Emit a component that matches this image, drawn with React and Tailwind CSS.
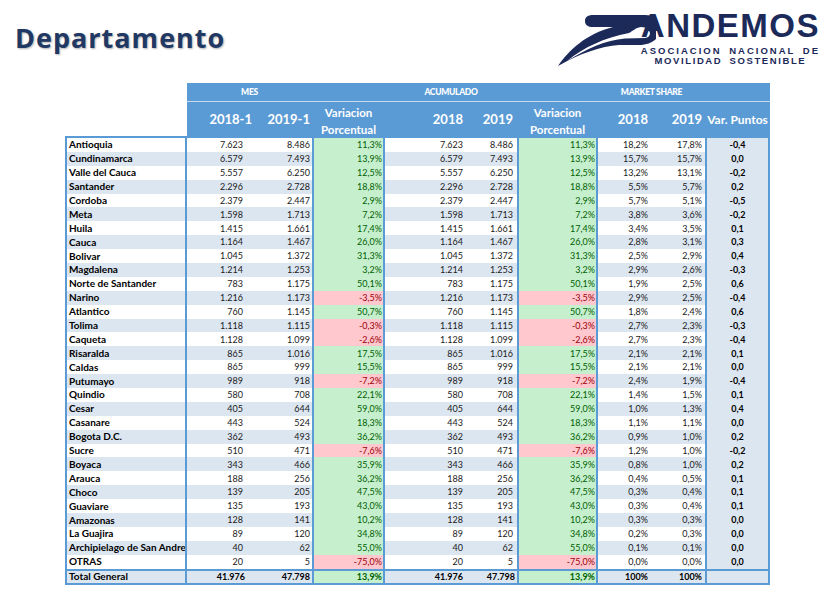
import React from "react";

const rows = [
  ["Antioquia", "7.623", "8.486", "11,3%", "18,2%", "17,8%", "-0,4"],
  ["Cundinamarca", "6.579", "7.493", "13,9%", "15,7%", "15,7%", "0,0"],
  ["Valle del Cauca", "5.557", "6.250", "12,5%", "13,2%", "13,1%", "-0,2"],
  ["Santander", "2.296", "2.728", "18,8%", "5,5%", "5,7%", "0,2"],
  ["Cordoba", "2.379", "2.447", "2,9%", "5,7%", "5,1%", "-0,5"],
  ["Meta", "1.598", "1.713", "7,2%", "3,8%", "3,6%", "-0,2"],
  ["Huila", "1.415", "1.661", "17,4%", "3,4%", "3,5%", "0,1"],
  ["Cauca", "1.164", "1.467", "26,0%", "2,8%", "3,1%", "0,3"],
  ["Bolivar", "1.045", "1.372", "31,3%", "2,5%", "2,9%", "0,4"],
  ["Magdalena", "1.214", "1.253", "3,2%", "2,9%", "2,6%", "-0,3"],
  ["Norte de Santander", "783", "1.175", "50,1%", "1,9%", "2,5%", "0,6"],
  ["Narino", "1.216", "1.173", "-3,5%", "2,9%", "2,5%", "-0,4"],
  ["Atlantico", "760", "1.145", "50,7%", "1,8%", "2,4%", "0,6"],
  ["Tolima", "1.118", "1.115", "-0,3%", "2,7%", "2,3%", "-0,3"],
  ["Caqueta", "1.128", "1.099", "-2,6%", "2,7%", "2,3%", "-0,4"],
  ["Risaralda", "865", "1.016", "17,5%", "2,1%", "2,1%", "0,1"],
  ["Caldas", "865", "999", "15,5%", "2,1%", "2,1%", "0,0"],
  ["Putumayo", "989", "918", "-7,2%", "2,4%", "1,9%", "-0,4"],
  ["Quindio", "580", "708", "22,1%", "1,4%", "1,5%", "0,1"],
  ["Cesar", "405", "644", "59,0%", "1,0%", "1,3%", "0,4"],
  ["Casanare", "443", "524", "18,3%", "1,1%", "1,1%", "0,0"],
  ["Bogota D.C.", "362", "493", "36,2%", "0,9%", "1,0%", "0,2"],
  ["Sucre", "510", "471", "-7,6%", "1,2%", "1,0%", "-0,2"],
  ["Boyaca", "343", "466", "35,9%", "0,8%", "1,0%", "0,2"],
  ["Arauca", "188", "256", "36,2%", "0,4%", "0,5%", "0,1"],
  ["Choco", "139", "205", "47,5%", "0,3%", "0,4%", "0,1"],
  ["Guaviare", "135", "193", "43,0%", "0,3%", "0,4%", "0,1"],
  ["Amazonas", "128", "141", "10,2%", "0,3%", "0,3%", "0,0"],
  ["La Guajira", "89", "120", "34,8%", "0,2%", "0,3%", "0,0"],
  ["Archipielago de San Andre", "40", "62", "55,0%", "0,1%", "0,1%", "0,0"],
  ["OTRAS", "20", "5", "-75,0%", "0,0%", "0,0%", "0,0"],
];

function Swoosh() {
  return (
    <svg
      width="100"
      height="58"
      viewBox="555 9 100 58"
      className="-mr-[15px] shrink-0"
    >
      <path
        fillRule="evenodd"
        fill="#1c2a5a"
        d="M584 21 C584 17 587 15 592 15 L644 15 C656 15 662 22 660 30 C658 39 650 45 638 45 L618 45 C600 46 578 54 557 66 C568 50 585 34 612 27 L592 27 C587 27 584 25 584 21 Z M640 27 C650 27 652 37 644 38 L624 38.5 C605 40 585 49 566 61 C583 47 603 38 628 33 C632 31 634 28 640 27 Z"
      />
    </svg>
  );
}

function Logo() {
  return (
    <div className="flex items-start pt-[9px] pr-[16px]">
      <Swoosh />
      <div className="flex flex-col items-center font-['Liberation_Sans',sans-serif] font-bold text-[#1c2a5a]">
        <div className="text-[33px] leading-[33px] tracking-[1.5px]">ANDEMOS</div>
        <div className="mt-[3.5px] text-[9.5px] leading-[10px] tracking-[2px] [word-spacing:3px] whitespace-nowrap">
          ASOCIACION NACIONAL DE
        </div>
        <div className="text-[9.5px] leading-[10px] tracking-[1.6px] [word-spacing:3px] whitespace-nowrap">
          MOVILIDAD SOSTENIBLE
        </div>
      </div>
    </div>
  );
}

const BL = "border-[#5b9bd5]";

function DataRow({ r, i }) {
  const bg = i % 2 ? "bg-[#dce6f1]" : "bg-white";
  const neg = r[3].startsWith("-");
  const vc = neg
    ? "bg-[#ffc7ce] text-[#9c0006]"
    : "bg-[#c6efce] text-[#006100]";
  return (
    <div className={`flex h-[13.9px] text-[9px] text-[#1a1a1a] ${bg}`}>
      <div className={`w-[122px] border-x-2 ${BL} pl-[2px] flex items-center font-bold text-[10px] text-black overflow-hidden whitespace-nowrap`}>
        {r[0]}
      </div>
      <div className="w-[63px] pr-[7px] flex items-center justify-end">{r[1]}</div>
      <div className="w-[62px] pr-[2px] flex items-center justify-end">{r[2]}</div>
      <div className={`w-[73px] border-x-2 ${BL} pr-[1px] flex items-center justify-end ${vc}`}>{r[3]}</div>
      <div className="w-[80px] pr-[2px] flex items-center justify-end">{r[1]}</div>
      <div className="w-[52px] pr-[4px] flex items-center justify-end">{r[2]}</div>
      <div className={`w-[81px] border-x-2 ${BL} pr-[1px] flex items-center justify-end ${vc}`}>{r[3]}</div>
      <div className="w-[54px] pr-[4px] flex items-center justify-end">{r[4]}</div>
      <div className="w-[53px] pr-[3px] flex items-center justify-end">{r[5]}</div>
      <div className={`w-[65px] border-x-2 ${BL} bg-[#dce6f1] flex items-center justify-center font-bold text-black`}>
        {r[6]}
      </div>
    </div>
  );
}

function TotalRow() {
  const vc = "bg-[#c6efce] text-[#006100]";
  return (
    <div className={`flex h-[16px] border-y-2 ${BL} bg-[#dce6f1] text-[9px] font-bold text-black`}>
      <div className={`w-[122px] border-x-2 ${BL} pl-[2px] flex items-center text-[10px] whitespace-nowrap`}>
        Total General
      </div>
      <div className="w-[63px] pr-[5px] flex items-center justify-end">41.976</div>
      <div className="w-[62px] pr-[2px] flex items-center justify-end">47.798</div>
      <div className={`w-[73px] border-x-2 ${BL} pr-[1px] flex items-center justify-end ${vc}`}>13,9%</div>
      <div className="w-[80px] pr-[2px] flex items-center justify-end">41.976</div>
      <div className="w-[52px] pr-[2px] flex items-center justify-end">47.798</div>
      <div className={`w-[81px] border-x-2 ${BL} pr-[1px] flex items-center justify-end ${vc}`}>13,9%</div>
      <div className="w-[54px] pr-[4px] flex items-center justify-end">100%</div>
      <div className="w-[53px] pr-[3px] flex items-center justify-end">100%</div>
      <div className={`w-[65px] border-x-2 ${BL}`}></div>
    </div>
  );
}

function Header() {
  return (
    <div className="flex h-[55px]">
      <div className={`w-[122px] border-b-2 ${BL}`}></div>
      <div className="w-[583px] bg-[#5b9bd5] flex flex-col text-white font-bold">
        <div className="h-[20px] flex border-b border-[#c5daf0] text-[8.5px] font-black tracking-[-0.3px]">
          <div className="w-[125px] flex items-end justify-center pb-[2px]">MES</div>
          <div className="w-[73px]"></div>
          <div className="w-[132px] flex items-end justify-center pb-[2px]">ACUMULADO</div>
          <div className="w-[81px]"></div>
          <div className="w-[107px] flex items-end justify-center pb-[2px]">MARKET SHARE</div>
          <div className="w-[65px]"></div>
        </div>
        <div className="flex flex-1 text-[13px]">
          <div className="w-[75px] pr-[10px] flex items-center justify-end">2018-1</div>
          <div className="w-[50px] pr-[2px] flex items-center justify-end">2019-1</div>
          <div className="w-[73px] flex flex-col items-center justify-center text-[11.5px] leading-[17px] pt-[2px]">
            <span>Variacion</span>
            <span>Porcentual</span>
          </div>
          <div className="w-[80px] pr-[2px] flex items-center justify-end">2018</div>
          <div className="w-[52px] pr-[4px] flex items-center justify-end">2019</div>
          <div className="w-[81px] flex flex-col items-center justify-center text-[11.5px] leading-[17px] pt-[2px]">
            <span>Variacion</span>
            <span>Porcentual</span>
          </div>
          <div className="w-[54px] pr-[4px] flex items-center justify-end">2018</div>
          <div className="w-[53px] pr-[3px] flex items-center justify-end">2019</div>
          <div className="w-[65px] flex items-center justify-center whitespace-nowrap text-[12px]">Var. Puntos</div>
        </div>
      </div>
    </div>
  );
}

export default function App() {
  return (
    <div className="w-[836px] h-[601px] bg-white overflow-hidden font-['Lato',sans-serif]">
      <div className="flex justify-between h-[83px]">
        <div className="pl-[15px] pt-[24px]">
          <div className="font-['Open_Sans',sans-serif] font-bold text-[27px] leading-[27px] tracking-[1px] text-[#1f3864] [text-shadow:1px_1px_2px_rgba(0,0,0,0.3)]">
            Departamento
          </div>
        </div>
        <Logo />
      </div>
      <div className="ml-[65px] w-[705px]">
        <Header />
        {rows.map((r, i) => (
          <DataRow key={r[0]} r={r} i={i} />
        ))}
        <TotalRow />
      </div>
    </div>
  );
}
